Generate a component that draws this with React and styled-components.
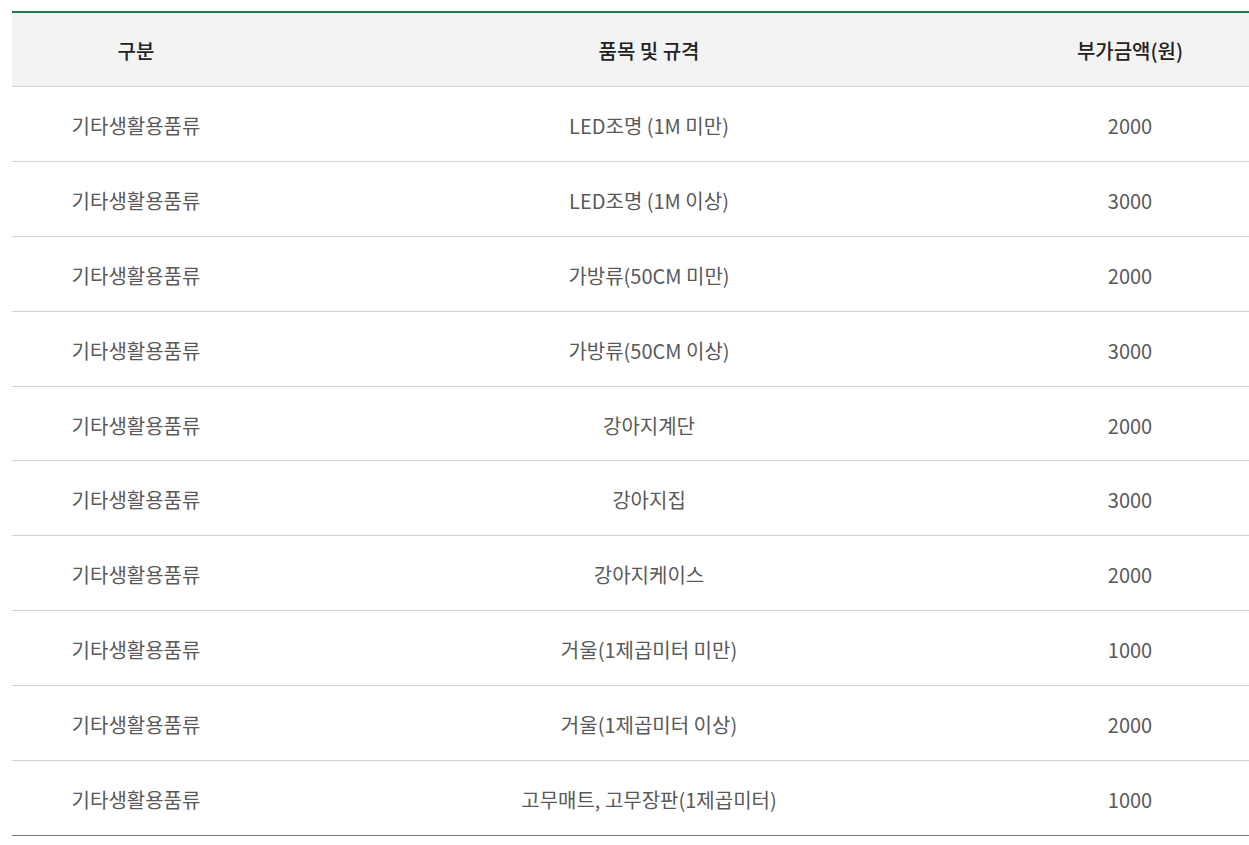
import React from "react";
import styled, { createGlobalStyle } from "styled-components";

const GlobalStyle = createGlobalStyle`
  html, body {
    margin: 0;
    padding: 0;
    background: #fff;
  }
  body {
    font-family: "Noto Sans CJK KR", "Noto Sans", sans-serif;
  }
`;

const Wrap = styled.div`
  padding: 11px 0 0 12px;
`;

const Table = styled.div`
  border-top: 2px solid #17804a;
  border-bottom: 1px solid #777;
`;

const Row = styled.div`
  display: grid;
  grid-template-columns: 248px 778px 1fr;
  align-items: center;
  background: ${(p) => (p.$head ? "#f3f3f3" : "#fff")};
  border-bottom: 1px solid #d2d2d2;
  height: ${(p) => (p.$head ? "73px" : "73.9px")};

  &:last-child {
    border-bottom: none;
  }
`;

const Cell = styled.div`
  text-align: center;
  font-size: 20px;
  line-height: 1;
  padding-top: ${(p) => (p.$head ? "2px" : "4px")};
  color: ${(p) => (p.$head ? "#222" : "#595959")};
  font-weight: ${(p) => (p.$head ? 500 : 400)};
  padding-right: ${(p) => (p.$last ? "27px" : "0")};
`;

const items = [
  ["LED조명 (1M 미만)", "2000"],
  ["LED조명 (1M 이상)", "3000"],
  ["가방류(50CM 미만)", "2000"],
  ["가방류(50CM 이상)", "3000"],
  ["강아지계단", "2000"],
  ["강아지집", "3000"],
  ["강아지케이스", "2000"],
  ["거울(1제곱미터 미만)", "1000"],
  ["거울(1제곱미터 이상)", "2000"],
  ["고무매트, 고무장판(1제곱미터)", "1000"],
];

export default function App() {
  return (
    <>
      <GlobalStyle />
      <Wrap>
        <Table>
          <Row $head>
            <Cell $head>구분</Cell>
            <Cell $head>품목 및 규격</Cell>
            <Cell $head $last>부가금액(원)</Cell>
          </Row>
          {items.map(([name, price], i) => (
            <Row key={i}>
              <Cell>기타생활용품류</Cell>
              <Cell>{name}</Cell>
              <Cell $last>{price}</Cell>
            </Row>
          ))}
        </Table>
      </Wrap>
    </>
  );
}
